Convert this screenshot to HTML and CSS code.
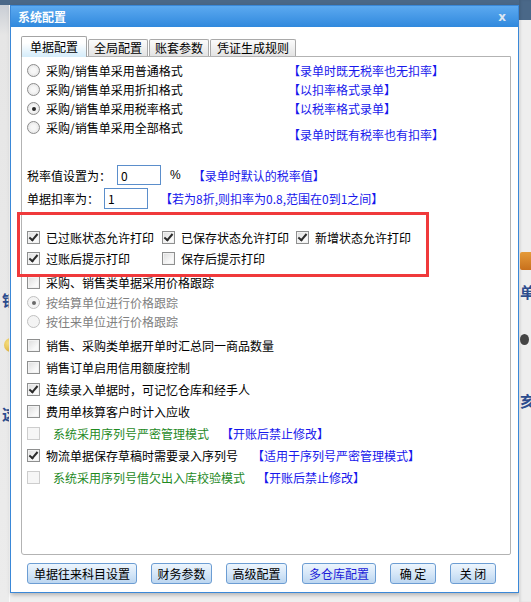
FILE: index.html
```html
<!DOCTYPE html>
<html lang="zh-CN">
<head>
<meta charset="UTF-8">
<title>系统配置</title>
<link rel="stylesheet" href="styles.css">
</head>
<body>

<div class="screen">
  <!-- application behind the dialog -->
  <div class="side side-left">
    <span class="bg-glyph g1">销</span>
    <span class="coin"></span>
    <span class="bg-glyph g2">这</span>
  </div>

  <div class="dialog">
    <div class="title-bar">
      <span class="title">系统配置</span>
      <span class="close">x</span>
    </div>

    <div class="dialog-body">
      <ul class="tabs">
        <li class="active">单据配置</li>
        <li>全局配置</li>
        <li>账套参数</li>
        <li>凭证生成规则</li>
      </ul>

      <div class="panel">
        <div class="formats">
          <div class="format-list">
            <label class="row r19"><span class="radio"></span>采购/销售单采用普通格式</label>
            <label class="row r19"><span class="radio"></span>采购/销售单采用折扣格式</label>
            <label class="row r19"><span class="radio on"></span>采购/销售单采用税率格式</label>
            <label class="row r19"><span class="radio"></span>采购/销售单采用全部格式</label>
          </div>
          <div class="format-notes">
            <div class="note r19">【录单时既无税率也无扣率】</div>
            <div class="note r19">【以扣率格式录单】</div>
            <div class="note r19">【以税率格式录单】</div>
            <div class="note r19 late">【录单时既有税率也有扣率】</div>
          </div>
        </div>

        <div class="field tax">
          <span>税率值设置为：</span>
          <span class="input in-tax">0</span>
          <span class="pct">%</span>
          <span class="note gap">【录单时默认的税率值】</span>
        </div>
        <div class="field discount">
          <span>单据扣率为：</span>
          <span class="input in-disc">1</span>
          <span class="note gap">【若为8折,则扣率为0.8,范围在0到1之间】</span>
        </div>

        <div class="print-grid">
          <label class="row"><span class="cb on"></span>已过账状态允许打印</label>
          <label class="row"><span class="cb on"></span>已保存状态允许打印</label>
          <label class="row"><span class="cb on"></span>新增状态允许打印</label>
          <label class="row"><span class="cb on"></span>过账后提示打印</label>
          <label class="row"><span class="cb"></span>保存后提示打印</label>
        </div>

        <div class="options">
          <label class="row r22"><span class="cb"></span>采购、销售类单据采用价格跟踪</label>
          <label class="row r19 grey"><span class="radio on dis"></span>按结算单位进行价格跟踪</label>
          <label class="row r19 grey"><span class="radio dis"></span>按往来单位进行价格跟踪</label>
          <label class="row r22 after-radio"><span class="cb"></span>销售、采购类单据开单时汇总同一商品数量</label>
          <label class="row r22"><span class="cb"></span>销售订单启用信用额度控制</label>
          <label class="row r22"><span class="cb on"></span>连续录入单据时，可记忆仓库和经手人</label>
          <label class="row r22"><span class="cb"></span>费用单核算客户时计入应收</label>
          <label class="row r22 green"><span class="cb dis"></span>系统采用序列号严密管理模式<span class="note gap">【开账后禁止修改】</span></label>
          <label class="row r22"><span class="cb on"></span>物流单据保存草稿时需要录入序列号<span class="note gap2">【适用于序列号严密管理模式】</span></label>
          <label class="row r22 green"><span class="cb dis"></span>系统采用序列号借欠出入库校验模式<span class="note gap">【开账后禁止修改】</span></label>
        </div>
      </div>

      <div class="buttons">
        <button class="btn w110">单据往来科目设置</button>
        <button class="btn w61">财务参数</button>
        <button class="btn w61">高级配置</button>
        <button class="btn w74 blue">多仓库配置</button>
        <button class="btn w46">确 定</button>
        <button class="btn w46">关 闭</button>
      </div>
    </div>
  </div>

  <div class="side side-right">
    <span class="basket"></span>
    <span class="bg-glyph g3">单</span>
    <span class="blob"></span>
    <span class="bg-glyph g4">亥</span>
  </div>

  <!-- red annotation frame drawn over the dialog -->
  <div class="mark"></div>
</div>

</body>
</html>
```

FILE: styles.css
```css
body {
  margin: 0;
  font-family: "Noto Sans CJK SC", "Microsoft YaHei", sans-serif;
  font-size: 12px;
  color: #000;
  overflow: hidden;
}

.screen {
  position: relative;
  display: flex;
  width: 531px;
  height: 602px;
  background: linear-gradient(#4a6888 0, #4a6888 5px, #efefef 5px);
}

/* Background window strips */
.side {
  display: flex;
  flex-direction: column;
  overflow: hidden;
  flex: none;
}

.side-left {
  width: 10px;
  margin-top: 5px;
  background: linear-gradient(#c9ced5 0, #e6e6e6 30px, #ececec);
  border-right: 1px solid #fafafa;
  box-sizing: border-box;
}

.side-right {
  flex: 1;
  background: linear-gradient(#4a6888 0, #4a6888 20px, #eeeeee 20px);
  box-shadow: inset 2px 0 2px rgba(0, 0, 0, 0.08);
  padding-left: 1px;
}

.bg-glyph {
  font-size: 15px;
  font-weight: bold;
  color: #2c4c8e;
  line-height: 16px;
  white-space: nowrap;
}

.g1 { margin: 287px 0 0 2px; }
.g2 { margin: 54px 0 0 2px; }
.g3 { margin: 14px 0 0 0; }
.g4 { margin: 48px 0 0 0; }

.coin {
  width: 14px;
  height: 14px;
  margin: 30px 0 0 4px;
  border-radius: 50%;
  background: radial-gradient(circle at 40% 35%, #fbe68a, #d7a52a);
}

.basket {
  width: 14px;
  height: 18px;
  margin: 252px 0 0 0;
  background: linear-gradient(#e59b3a, #c8701c);
  border-radius: 2px;
}

.blob {
  width: 9px;
  height: 11px;
  margin: 34px 0 0 0;
  border-radius: 50%;
  background: #444;
}

/* Dialog */
.dialog {
  width: 509px;
  height: 588px;
  margin-top: 5px;
  flex: none;
  border: 1px solid #3a88d8;
  box-sizing: border-box;
  background-color: #fff;
  box-shadow: 1px 2px 4px rgba(0, 0, 0, 0.25);
}

.title-bar {
  height: 21px;
  display: flex;
  align-items: center;
  justify-content: space-between;
  padding: 0 12px 0 7px;
  background: linear-gradient(#5ca9f0, #3089dd);
  color: #fff;
}

.title {
  font-weight: bold;
  font-size: 12px;
}

.close {
  font-family: "DejaVu Sans", sans-serif;
  font-size: 12px;
  font-weight: bold;
  color: #dbe6f2;
}

.dialog-body {
  padding: 9px 7px 0 10px;
}

/* Tabs */
.tabs {
  list-style-type: none;
  margin: 0;
  padding: 0;
  display: flex;
  align-items: flex-end;
  height: 20px;
}

.tabs li {
  height: 17px;
  line-height: 16px;
  padding: 0 5px;
  margin-right: 1px;
  border: 1px solid #a9a9a9;
  border-bottom: none;
  border-radius: 2px 2px 0 0;
  background: linear-gradient(#fbfbfb, #e3e3e3);
  box-sizing: border-box;
  white-space: nowrap;
}

.tabs li:nth-child(4) {
  padding: 0 6px;
}

.tabs li.active {
  height: 21px;
  line-height: 20px;
  padding: 0 8px;
  margin-bottom: -1px;
  background: linear-gradient(#ffffff, #ffffff 30%, #d4ecfa);
  border-color: #a4a4a4;
  position: relative;
}

/* Panel */
.panel {
  height: 499px;
  border: 1px solid #b3b3b3;
  border-radius: 0 0 2px 3px;
  box-sizing: border-box;
  padding: 4px 0 0 5px;
}

.row {
  display: flex;
  align-items: center;
  white-space: nowrap;
  height: 21px;
}

.r19 { height: 19px; }
.r22 { height: 22px; }

.formats {
  display: flex;
}

.format-list {
  width: 261px;
}

.note {
  color: #1717ec;
  white-space: nowrap;
}

.format-notes .note {
  display: flex;
  align-items: center;
}

.format-notes .late {
  margin-top: 7px;
}

.gap { margin-left: 12px; }
.gap2 { margin-left: 14px; }

/* Controls */
.radio {
  width: 13px;
  height: 13px;
  margin-right: 6px;
  border: 1px solid #8c8c8c;
  border-radius: 50%;
  box-sizing: border-box;
  background: radial-gradient(circle at 50% 50%, #f7f7f7 30%, #dedede 100%);
  display: flex;
  align-items: center;
  justify-content: center;
  flex: none;
}

.radio.on::after {
  content: "";
  width: 4px;
  height: 4px;
  border-radius: 50%;
  background-color: #2a2a2a;
}

.radio.dis {
  border-color: #c0c0c0;
  background: #f4f4f4;
}

.radio.dis.on::after {
  background-color: #6a6a6a;
}

.cb {
  width: 13px;
  height: 13px;
  margin-right: 6px;
  border: 1px solid #8e8f8f;
  box-sizing: border-box;
  background: linear-gradient(135deg, #dcdcdc, #f9f9f9 70%);
  box-shadow: inset 0 0 0 1px #f2f2f2;
  flex: none;
  position: relative;
}

.cb.on::after {
  content: "";
  position: absolute;
  left: 3px;
  top: 0px;
  width: 3px;
  height: 7px;
  border: solid #2b2b2b;
  border-width: 0 2px 2px 0;
  transform: rotate(40deg);
}

.cb.dis {
  border-color: #cdcdcd;
  background: #f6f6f6;
  box-shadow: none;
}

.grey { color: #7f7f7f; }

.green { color: #1f8a1f; }
.green .cb { margin-right: 13px; }

/* Tax and discount fields */
.field {
  display: flex;
  align-items: center;
  white-space: nowrap;
}

.tax {
  height: 20px;
  margin-top: 21px;
}

.discount {
  height: 21px;
  margin-top: 3px;
}

.input {
  width: 44px;
  height: 100%;
  border: 1px solid #5b8ecb;
  box-sizing: border-box;
  padding-left: 3px;
  display: flex;
  align-items: center;
  background-color: #fff;
}

.in-tax { margin-left: 6px; }
.in-disc { margin-left: 5px; }

.pct {
  margin-left: 9px;
  font-family: "Liberation Sans", sans-serif;
}

/* Print options */
.print-grid {
  display: grid;
  grid-template-columns: 135px 134px auto;
  margin-top: 18px;
}

.options {
  margin-top: 2px;
}

.after-radio {
  margin-top: 3px;
}

/* Buttons */
.buttons {
  display: flex;
  gap: 14px;
  margin: 8px 0 0 6px;
}

.btn {
  height: 21px;
  padding: 0;
  font-family: "Noto Sans CJK SC", sans-serif;
  font-size: 12px;
  color: #000;
  border: 1px solid #6c9dd3;
  border-radius: 3px;
  background: linear-gradient(#edf5fd, #d6e7f8 50%, #bcd6f0);
  white-space: nowrap;
}

.btn.blue { color: #1a1ad8; }

.w110 { width: 110px; }
.w61 { width: 61px; }
.w74 { width: 74px; margin-left: 1px; }
.w46 { width: 46px; }

/* Red annotation */
.mark {
  position: absolute;
  left: 17px;
  top: 212px;
  width: 412px;
  height: 65px;
  border: 3px solid #f0393b;
  box-sizing: border-box;
}
```
